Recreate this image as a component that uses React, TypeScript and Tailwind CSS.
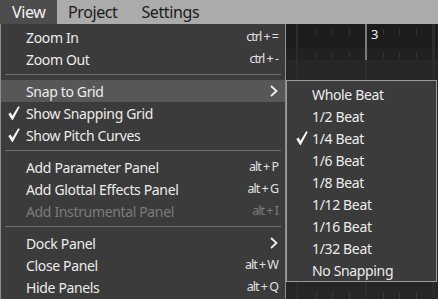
import React from 'react';

type Item =
  | { kind: 'sep' }
  | { kind: 'item'; label: string; shortcut?: string; checked?: boolean; disabled?: boolean; sub?: boolean; active?: boolean };

const viewItems: Item[] = [
  { kind: 'item', label: 'Zoom In', shortcut: 'ctrl + =' },
  { kind: 'item', label: 'Zoom Out', shortcut: 'ctrl + -' },
  { kind: 'sep' },
  { kind: 'item', label: 'Snap to Grid', sub: true, active: true },
  { kind: 'item', label: 'Show Snapping Grid', checked: true },
  { kind: 'item', label: 'Show Pitch Curves', checked: true },
  { kind: 'sep' },
  { kind: 'item', label: 'Add Parameter Panel', shortcut: 'alt + P' },
  { kind: 'item', label: 'Add Glottal Effects Panel', shortcut: 'alt + G' },
  { kind: 'item', label: 'Add Instrumental Panel', shortcut: 'alt + I', disabled: true },
  { kind: 'sep' },
  { kind: 'item', label: 'Dock Panel', sub: true },
  { kind: 'item', label: 'Close Panel', shortcut: 'alt + W' },
  { kind: 'item', label: 'Hide Panels', shortcut: 'alt + Q' },
];

const snapItems = ['Whole Beat', '1/2 Beat', '1/4 Beat', '1/6 Beat', '1/8 Beat', '1/12 Beat', '1/16 Beat', '1/32 Beat', 'No Snapping'];

function Check() {
  return (
    <svg width="12" height="14" viewBox="0 0 12 14" className="text-[#f4f4f4]">
      <path d="M0.3 8 L2.6 6.4 L4.4 9.7 L10.2 0.2 L11.8 1.1 L4.8 13.9 L4 13.9 Z" fill="currentColor" />
    </svg>
  );
}

function Chevron() {
  return (
    <svg width="8" height="12" viewBox="0 0 8 12">
      <polyline points="1,1 6.5,6 1,11" fill="none" stroke="#f0f0f0" strokeWidth="1.8" />
    </svg>
  );
}

function Canvas() {
  const ticks = [316, 332, 349, 383, 399, 416];
  return (
    <div className="relative h-[275px] bg-[#262626]">
      <div className="h-[24px] bg-[#1c1c1c]" />
      <div className="h-[12px] bg-[#212121]" />
      <div className="h-[20px] bg-[#262626]" />
      <svg className="absolute inset-0" width="438" height="275">
        <rect x="296" y="0" width="2" height="275" fill="#2c2c2c" />
        <rect x="432" y="0" width="3" height="275" fill="#2c2c2c" />
        <rect x="365" y="0" width="2" height="36" fill="#7a7a7a" />
        <rect x="365" y="36" width="2" height="239" fill="#2e2e2e" />
        {ticks.map((x) => (
          <g key={x}>
            <rect x={x} y="5" width="1" height="6" fill="#333" />
            <rect x={x} y="28" width="1" height="6" fill="#333" />
            <rect x={x} y="268" width="1" height="7" fill="#3a3a3a" />
          </g>
        ))}
      </svg>
      <span className="absolute left-[371px] top-[1px] text-[13px] text-[#eeeeee]">3</span>
    </div>
  );
}

export default function App() {
  return (
    <div className="relative w-[438px] h-[299px] overflow-hidden bg-[#262626] font-['Noto_Sans',sans-serif]">
      {/* menu bar */}
      <div className="flex h-[24px] items-center bg-[#ababab] text-[16px] tracking-[-0.4px] text-[#1b1b1b]">
        <div className="flex h-full w-[57px] items-center pl-[12px] bg-[#4d4d4d] text-[#f2f2f2]">View</div>
        <div className="pl-[11px]">Project</div>
        <div className="pl-[24px]">Settings</div>
      </div>

      <Canvas />

      {/* View menu */}
      <div className="absolute left-0 top-[24px] w-[286px] h-[280px] border-x border-[#8e8e8e] bg-[#3b3b3b] pt-[2px] text-[14px] tracking-[-0.35px] text-[#ececec]">
        {viewItems.map((it, i) =>
          it.kind === 'sep' ? (
            <div key={i} className="h-[10px] pt-[4px] px-[4px]">
              <div className="h-px bg-[#6e6e6e]" />
            </div>
          ) : (
            <div
              key={i}
              className={`relative flex h-[22px] items-center pl-[25px] pr-[7px] ${it.active ? 'bg-[#575757]' : ''} ${it.disabled ? 'text-[#7c7c7c]' : ''}`}
            >
              {it.checked && (
                <span className="absolute left-[7px] top-[4px]">
                  <Check />
                </span>
              )}
              <span className="flex-1">{it.label}</span>
              {it.shortcut && (
                <span className={`text-[12.5px] tracking-[-1px] ${it.disabled ? 'text-[#7c7c7c]' : 'text-[#e0e0e0]'}`}>{it.shortcut}</span>
              )}
              {it.sub && <Chevron />}
            </div>
          )
        )}
      </div>

      {/* Snap to Grid submenu */}
      <div className="absolute left-[286px] top-[80px] w-[151px] border border-[#9a9a9a] bg-[#3b3b3b] pt-[2px] text-[14px] tracking-[-0.35px] text-[#ececec]">
        {snapItems.map((s) => (
          <div key={s} className="relative flex h-[22px] items-center pl-[25px]">
            {s === '1/4 Beat' && (
              <span className="absolute left-[9px] top-[4px]">
                <Check />
              </span>
            )}
            {s}
          </div>
        ))}
      </div>
    </div>
  );
}
